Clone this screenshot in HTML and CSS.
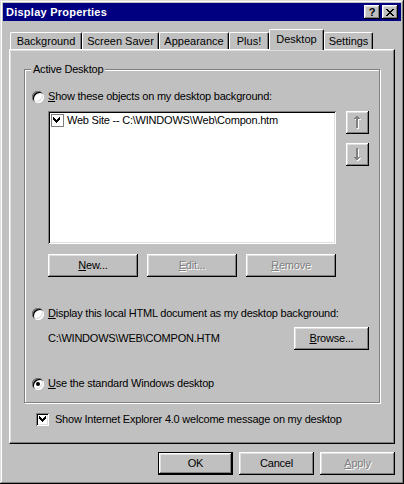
FILE: index.html
```html
<!DOCTYPE html>
<html>
<head>
<meta charset="utf-8">
<link rel="stylesheet" href="styles.css">
</head>
<body>
<div class="window">
  <div class="titlebar">
    <span class="title">Display Properties</span>
    <div class="caption-btns">
      <span class="cbtn help">?</span>
      <span class="cbtn close">
        <svg width="8" height="7" viewBox="0 0 8 7" shape-rendering="crispEdges">
          <rect x="0" y="0" width="2" height="1"/><rect x="6" y="0" width="2" height="1"/>
          <rect x="1" y="1" width="2" height="1"/><rect x="5" y="1" width="2" height="1"/>
          <rect x="2" y="2" width="4" height="1"/>
          <rect x="3" y="3" width="2" height="1"/>
          <rect x="2" y="4" width="4" height="1"/>
          <rect x="1" y="5" width="2" height="1"/><rect x="5" y="5" width="2" height="1"/>
          <rect x="0" y="6" width="2" height="1"/><rect x="6" y="6" width="2" height="1"/>
        </svg>
      </span>
    </div>
  </div>
  <div class="client">
    <div class="tabs">
      <div class="tab t-bg">Background</div>
      <div class="tab t-ss">Screen Saver</div>
      <div class="tab t-ap">Appearance</div>
      <div class="tab t-pl">Plus!</div>
      <div class="tab t-dt active">Desktop</div>
      <div class="tab t-st">Settings</div>
    </div>
    <div class="panel">
      <div class="group">
        <span class="legend">Active Desktop</span>
        <div class="opt"><span class="radio"></span><span><u>S</u>how these objects on my desktop background:</span></div>
        <div class="list-row">
          <div class="list">
            <div class="item">
              <span class="lchk">
                <svg width="11" height="11" viewBox="0 0 11 11" shape-rendering="crispEdges">
                  <rect x="7" y="2" width="1" height="3"/>
                  <rect x="6" y="3" width="1" height="3"/>
                  <rect x="5" y="4" width="1" height="3"/>
                  <rect x="4" y="5" width="1" height="3"/>
                  <rect x="3" y="4" width="1" height="3"/>
                  <rect x="2" y="3" width="1" height="3"/>
                  <rect x="1" y="2" width="1" height="3"/>
                </svg>
              </span>
              <span>Web Site -- C:\WINDOWS\Web\Compon.htm</span>
            </div>
          </div>
          <div class="arrows">
            <div class="btn sq">
              <svg width="9" height="14" viewBox="0 0 9 14" shape-rendering="crispEdges">
                <g fill="#fff" transform="translate(1,1)">
                  <rect x="3" y="0" width="2" height="1"/>
                  <rect x="2" y="1" width="4" height="1"/>
                  <rect x="1" y="2" width="6" height="1"/>
                  <rect x="3" y="3" width="2" height="9"/>
                </g>
                <g fill="#808080">
                  <rect x="3" y="0" width="2" height="1"/>
                  <rect x="2" y="1" width="4" height="1"/>
                  <rect x="1" y="2" width="6" height="1"/>
                  <rect x="3" y="3" width="2" height="9"/>
                </g>
              </svg>
            </div>
            <div class="btn sq">
              <svg width="9" height="14" viewBox="0 0 9 14" shape-rendering="crispEdges">
                <g fill="#fff" transform="translate(1,1)">
                  <rect x="3" y="0" width="2" height="9"/>
                  <rect x="1" y="9" width="6" height="1"/>
                  <rect x="2" y="10" width="4" height="1"/>
                  <rect x="3" y="11" width="2" height="1"/>
                </g>
                <g fill="#808080">
                  <rect x="3" y="0" width="2" height="9"/>
                  <rect x="1" y="9" width="6" height="1"/>
                  <rect x="2" y="10" width="4" height="1"/>
                  <rect x="3" y="11" width="2" height="1"/>
                </g>
              </svg>
            </div>
          </div>
        </div>
        <div class="btn-row">
          <div class="btn w90"><span><u>N</u>ew...</span></div>
          <div class="btn w90 disabled"><span><u>E</u>dit...</span></div>
          <div class="btn w90 disabled"><span><u>R</u>emove</span></div>
        </div>
        <div class="opt mt30"><span class="radio"></span><span><u>D</u>isplay this local HTML document as my desktop background:</span></div>
        <div class="path-row">
          <span>C:\WINDOWS\WEB\COMPON.HTM</span>
          <div class="btn w75"><span><u>B</u>rowse...</span></div>
        </div>
        <div class="opt mt27"><span class="radio on"></span><span><u>U</u>se the standard Windows desktop</span></div>
      </div>
      <div class="chk-row">
        <span class="chk">
          <svg width="13" height="13" viewBox="0 0 13 13" shape-rendering="crispEdges">
            <rect x="9" y="3" width="1" height="3"/>
            <rect x="8" y="4" width="1" height="3"/>
            <rect x="7" y="5" width="1" height="3"/>
            <rect x="6" y="6" width="1" height="3"/>
            <rect x="5" y="5" width="1" height="3"/>
            <rect x="4" y="4" width="1" height="3"/>
            <rect x="3" y="3" width="1" height="3"/>
          </svg>
        </span>
        <span>Show Internet Explorer 4.0 welcome message on my desktop</span>
      </div>
    </div>
    <div class="footer">
      <div class="btn w75 default"><span>OK</span></div>
      <div class="btn w75"><span>Cancel</span></div>
      <div class="btn w75 disabled"><span><u>A</u>pply</span></div>
    </div>
  </div>
</div>
</body>
</html>
```
FILE: styles.css
```css
* { box-sizing: border-box; }
html, body { margin: 0; padding: 0; background: #c0c0c0; }
body {
  font-family: "Liberation Sans", Arial, sans-serif;
  font-size: 11px;
  line-height: 13px;
  letter-spacing: -0.22px;
  color: #000;
}
u { text-decoration: underline; text-underline-offset: 1px; }

.window {
  width: 404px;
  height: 484px;
  background: #c0c0c0;
  padding: 3px;
  display: flex;
  flex-direction: column;
  box-shadow: inset -1px -1px #000, inset 1px 1px #dfdfdf, inset -2px -2px #808080, inset 2px 2px #fff;
}

.titlebar {
  height: 18px;
  flex: none;
  background: #000080;
  color: #fff;
  display: flex;
  align-items: center;
  justify-content: space-between;
  padding: 0 3px 0 3px;
}
.title { font-weight: bold; font-size: 11px; letter-spacing: 0.25px; }
.caption-btns { display: flex; gap: 2px; }
.cbtn {
  width: 16px;
  height: 14px;
  background: #c0c0c0;
  color: #000;
  display: flex;
  align-items: center;
  justify-content: center;
  font-weight: bold;
  font-size: 11px;
  letter-spacing: 0;
  box-shadow: inset -1px -1px #000, inset 1px 1px #fff, inset -2px -2px #808080, inset 2px 2px #dfdfdf;
}
.cbtn svg { display: block; fill: #000; }

.client {
  flex: 1;
  padding: 8px 6px 0 6px;
  display: flex;
  flex-direction: column;
}

.tabs {
  display: flex;
  height: 20px;
  padding-left: 1px;
  position: relative;
  z-index: 1;
}
.tab {
  margin-top: 3px;
  height: 17px;
  border-top: 1px solid #fff;
  border-left: 1px solid #fff;
  border-right: 1px solid #000;
  border-radius: 2px 2px 0 0;
  box-shadow: inset -1px 0 #808080;
  display: flex;
  align-items: center;
  justify-content: center;
  background: #c0c0c0;
  letter-spacing: 0;
}
.tab.active {
  margin-top: 0;
  height: 21px;
  margin-bottom: -1px;
  padding-bottom: 2px;
}
.t-bg { width: 72px; }
.t-ss { width: 77px; }
.t-ap { width: 70px; }
.t-pl { width: 40px; }
.t-dt { width: 55px; }
.t-st { width: 49px; }

.panel {
  flex: none;
  height: 395px;
  border: 1px solid;
  border-color: #fff #000 #000 #fff;
  box-shadow: inset -1px -1px #808080, inset 1px 1px #dfdfdf;
  padding: 19px 14px 0 14px;
}

.group {
  position: relative;
  height: 334px;
  border: 1px solid #808080;
  box-shadow: inset 1px 1px #fff, 1px 1px #fff;
  padding: 20px 10px 0 7px;
}
.legend {
  position: absolute;
  top: -7px;
  left: 6px;
  padding: 0 2px;
  background: #c0c0c0;
  line-height: 13px;
}

.opt {
  display: flex;
  align-items: center;
  height: 13px;
  gap: 4px;
}
.mt30 { margin-top: 30px; }
.mt27 { margin-top: 27px; }

.radio {
  flex: none;
  position: relative;
  width: 12px;
  height: 12px;
  border-radius: 50%;
  background: #fff;
  box-shadow: inset 1px 1px #808080, inset -1px -1px #fff, inset 2px 2px #000, inset -2px -2px #dfdfdf;
}
.radio.on::after {
  content: "";
  position: absolute;
  left: 4px;
  top: 4px;
  width: 4px;
  height: 4px;
  border-radius: 50%;
  background: #000;
}

.list-row {
  display: flex;
  margin: 8px 0 0 16px;
}
.list {
  width: 288px;
  height: 133px;
  background: #fff;
  padding: 3px;
  box-shadow: inset 1px 1px #808080, inset -1px -1px #fff, inset 2px 2px #000, inset -2px -2px #dfdfdf;
}
.item {
  display: flex;
  align-items: center;
  gap: 3px;
  height: 13px;
}
.lchk {
  flex: none;
  width: 13px;
  height: 13px;
  border: 1px solid #808080;
  background: #fff;
}
.lchk svg { display: block; }

.arrows {
  margin-left: 10px;
  display: flex;
  flex-direction: column;
  gap: 9px;
}

.btn {
  height: 23px;
  display: flex;
  align-items: center;
  justify-content: center;
  background: #c0c0c0;
  box-shadow: inset -1px -1px #000, inset 1px 1px #fff, inset -2px -2px #808080, inset 2px 2px #dfdfdf;
}
.btn.sq { width: 23px; }
.btn.default {
  border: 1px solid #000;
}
.w90 { width: 90px; }
.w75 { width: 75px; }
.disabled { color: #808080; text-shadow: 1px 1px 0 #fff; }

.btn-row {
  display: flex;
  gap: 9px;
  margin: 10px 0 0 16px;
}

.path-row {
  display: flex;
  align-items: center;
  justify-content: space-between;
  margin: 7px 0 0 16px;
}

.chk-row {
  display: flex;
  align-items: center;
  gap: 6px;
  height: 13px;
  margin: 10px 0 0 12px;
}
.chk {
  flex: none;
  width: 13px;
  height: 13px;
  background: #fff;
  box-shadow: inset 1px 1px #808080, inset -1px -1px #fff, inset 2px 2px #000, inset -2px -2px #dfdfdf;
}
.chk svg { display: block; }

.footer {
  display: flex;
  justify-content: flex-end;
  gap: 6px;
  margin-top: 8px;
}
```
